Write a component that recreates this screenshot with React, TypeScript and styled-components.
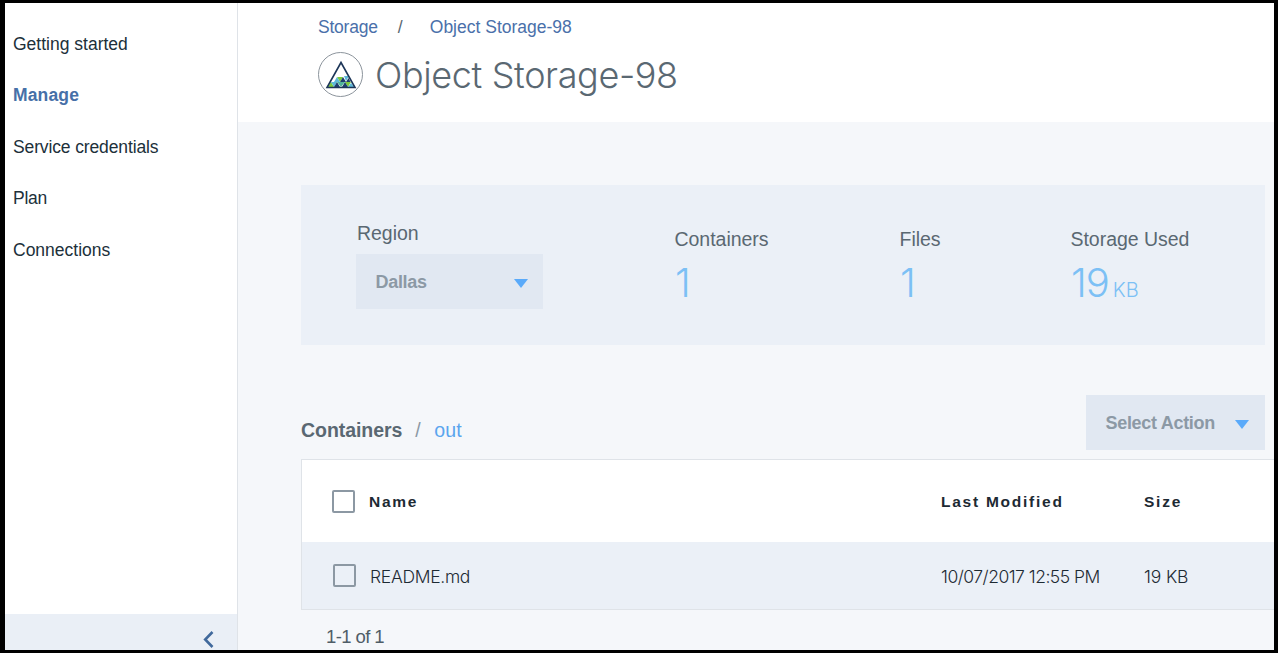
import React from 'react';
import styled, { createGlobalStyle } from 'styled-components';

const sans = '"Liberation Sans", Arial, sans-serif';
const light = 'Inter, "Liberation Sans", sans-serif';

const GlobalStyle = createGlobalStyle`
  *, *::before, *::after { box-sizing: border-box; }
  body { margin: 0; font-family: ${sans}; color: #1d3649; }
`;

const Frame = styled.div`
  display: flex;
  width: 1278px;
  height: 653px;
  overflow: hidden;
  border: solid #000;
  border-width: 3px 4px 3px 5px;
  background: #f5f7fa;
`;

const Sidebar = styled.aside`
  display: flex;
  flex-direction: column;
  flex: 0 0 233px;
  background: #fff;
  border-right: 1px solid #dfe3e8;
`;

const Nav = styled.nav`
  display: flex;
  flex-direction: column;
  flex: 1;
  padding: 15.5px 0 0 8px;
`;

const NavItem = styled.a<{ $active?: boolean; $spacing: number }>`
  height: 51.5px;
  line-height: 51.5px;
  font-size: 17.5px;
  white-space: nowrap;
  letter-spacing: ${(p) => p.$spacing}px;
  font-weight: ${(p) => (p.$active ? 700 : 400)};
  color: ${(p) => (p.$active ? '#4670a8' : '#20303a')};
`;

const Collapse = styled.div`
  display: flex;
  justify-content: flex-end;
  height: 36px;
  padding: 16px 23px 0 0;
  background: #eaeff6;
`;

const Main = styled.main`
  display: flex;
  flex-direction: column;
  flex: 1;
  min-width: 0;
`;

const Header = styled.header`
  height: 119px;
  padding: 13px 0 0 80px;
  background: #fff;
`;

const Crumbs = styled.div`
  display: flex;
  align-items: center;
  height: 22px;
  font-size: 17.5px;
  letter-spacing: -0.22px;
  color: #4a70aa;
`;

const CrumbSlash = styled.span`
  width: 52px;
  padding-left: 20px;
  color: #5a6872;
`;

const CrumbCurrent = styled.span`
  letter-spacing: 0;
`;

const TitleRow = styled.div`
  display: flex;
  align-items: center;
  height: 46px;
  margin-top: 14px;
`;

const Title = styled.h1`
  margin: 0 0 0 11px;
  font-family: ${light};
  font-size: 36px;
  font-weight: 300;
  line-height: 46px;
  letter-spacing: -0.37px;
  white-space: nowrap;
  color: #5a6872;
`;

const Content = styled.section`
  display: flex;
  flex-direction: column;
  flex: 1;
  padding: 63px 0 0 63px;
`;

const Summary = styled.div`
  display: grid;
  grid-template-columns: 318px 225px 171px 1fr;
  width: 964px;
  height: 160px;
  padding: 36px 0 0 55px;
  background: #ebf0f7;
`;

const Label = styled.div`
  height: 24px;
  line-height: 24px;
  padding-left: 1px;
  font-size: 19.5px;
  letter-spacing: -0.03px;
  color: #5a6872;
`;

const Stat = styled.div`
  margin-left: -0.5px;
  padding-top: 6px;
`;

const StatValue = styled.div`
  display: flex;
  align-items: baseline;
  margin-top: 7px;
  padding-left: 1.5px;
  font-family: ${light};
  font-size: 40px;
  line-height: 50px;
  font-weight: 300;
  letter-spacing: -1px;
  color: #7cc0f5;
`;

const Unit = styled.span`
  margin-left: 4px;
  font-size: 20px;
  font-weight: 300;
  letter-spacing: 0;
`;

const Select = styled.div<{ $width: number }>`
  display: flex;
  align-items: center;
  justify-content: space-between;
  width: ${(p) => p.$width}px;
  height: 55px;
  padding: 2px 15px 0 19.5px;
  background: #e1e8f2;
  font-size: 18px;
  font-weight: 700;
  letter-spacing: -0.3px;
  color: #8c99a5;
`;

const RegionSelect = styled(Select)`
  margin-top: 9px;
`;

const ActionSelect = styled(Select)`
  padding-right: 16px;
`;

const Caret = styled.i`
  margin-top: 1px;
  border: solid transparent;
  border-width: 9px 7.5px 0;
  border-top-color: #5aaafa;
`;

const Toolbar = styled.div`
  display: flex;
  justify-content: space-between;
  width: 964px;
  height: 55px;
  margin: 50px 0 9px;
`;

const Path = styled.div`
  display: flex;
  align-items: center;
  padding-top: 16px;
  font-size: 19.5px;
  color: #5a6872;
`;

const PathRoot = styled.b`
  letter-spacing: -0.05px;
`;

const PathSlash = styled.span`
  padding: 0 13.5px 0 13px;
  color: #8c99a5;
`;

const PathLink = styled.span`
  letter-spacing: 0.2px;
  color: #5aa5ee;
`;

const Table = styled.div`
  border: solid #dfe3e8;
  border-width: 1px 0 1px 1px;
`;

const Row = styled.div<{ $head?: boolean }>`
  display: grid;
  grid-template-columns: 37px ${(p) => (p.$head ? 572 : 571)}px 203px 1fr;
  align-items: center;
  height: ${(p) => (p.$head ? 82 : 67)}px;
  padding-left: ${(p) => (p.$head ? 30 : 31)}px;
  background: ${(p) => (p.$head ? '#fff' : '#ebf0f7')};
`;

const HeadCell = styled.div`
  padding-top: 2px;
  font-size: 15.5px;
  font-weight: 700;
  letter-spacing: 1.75px;
  color: #1d2a33;
`;

const Cell = styled.div<{ $spacing: number }>`
  padding-top: 2px;
  font-family: ${light};
  font-size: 17.5px;
  font-weight: 300;
  letter-spacing: ${(p) => p.$spacing}px;
  color: #1d2a33;
`;

const Checkbox = styled.span`
  width: 23px;
  height: 23px;
  border: 2px solid #8c98a3;
  border-radius: 2px;
`;

const Count = styled.div`
  padding: 15px 0 0 25px;
  font-size: 18.5px;
  line-height: 24px;
  letter-spacing: -0.6px;
  color: #4f5d67;
`;

const StorageLogo = () => (
  <svg width="46" height="46" viewBox="0 0 46 46">
    <circle cx="22.5" cy="22.5" r="22" fill="#fff" stroke="#8c949c" strokeWidth="1" />
    <path d="M10 35l3-5 3 5zM19 25h6l-3 5zM27 30h6l-3 5z" fill="#7dcb3c" />
    <path d="M13 30h6l-3 5zM16 30l3-5 3 5zM26 24h5l-3 5zM30 35l3-4 3 4z" fill="#5cb8d8" />
    <path d="M16 35l3-5 3 5zM22 30l3-5 3 5zM28 30l2.500-4 2 4zM24 35l3-5 3 5z" fill="#1d3f6e" />
    <path d="M19 30h8l-4 5z" fill="#4fb49a" />
    <path d="M23 10.500L9 35.500h28z" fill="none" stroke="#1d3658" strokeWidth="1.600" />
  </svg>
);

const ChevronLeft = () => (
  <svg width="12" height="18" viewBox="0 0 12 18">
    <path d="M10.500 2L3.200 9.500l7.300 7.500" fill="none" stroke="#41699c" strokeWidth="2.600" />
  </svg>
);

const navItems = [
  { label: 'Getting started', spacing: 0 },
  { label: 'Manage', active: true, spacing: 0.15 },
  { label: 'Service credentials', spacing: -0.13 },
  { label: 'Plan', spacing: -0.25 },
  { label: 'Connections', spacing: 0 },
];

export default function App() {
  return (
    <>
      <GlobalStyle />
      <Frame>
        <Sidebar>
          <Nav>
            {navItems.map((n) => (
              <NavItem key={n.label} $active={n.active} $spacing={n.spacing}>{n.label}</NavItem>
            ))}
          </Nav>
          <Collapse><ChevronLeft /></Collapse>
        </Sidebar>
        <Main>
          <Header>
            <Crumbs>
              <span>Storage</span>
              <CrumbSlash>/</CrumbSlash>
              <CrumbCurrent>Object Storage-98</CrumbCurrent>
            </Crumbs>
            <TitleRow>
              <StorageLogo />
              <Title>Object Storage-98</Title>
            </TitleRow>
          </Header>
          <Content>
            <Summary>
              <div>
                <Label>Region</Label>
                <RegionSelect $width={187}>Dallas<Caret /></RegionSelect>
              </div>
              <Stat>
                <Label>Containers</Label>
                <StatValue>1</StatValue>
              </Stat>
              <Stat>
                <Label>Files</Label>
                <StatValue>1</StatValue>
              </Stat>
              <Stat>
                <Label>Storage Used</Label>
                <StatValue>19<Unit>KB</Unit></StatValue>
              </Stat>
            </Summary>
            <Toolbar>
              <Path>
                <PathRoot>Containers</PathRoot>
                <PathSlash>/</PathSlash>
                <PathLink>out</PathLink>
              </Path>
              <ActionSelect $width={179}>Select Action<Caret /></ActionSelect>
            </Toolbar>
            <Table>
              <Row $head>
                <Checkbox />
                <HeadCell>Name</HeadCell>
                <HeadCell>Last Modified</HeadCell>
                <HeadCell>Size</HeadCell>
              </Row>
              <Row>
                <Checkbox />
                <Cell $spacing={-0.3}>README.md</Cell>
                <Cell $spacing={-0.5}>10/07/2017 12:55 PM</Cell>
                <Cell $spacing={-0.15}>19 KB</Cell>
              </Row>
            </Table>
            <Count>1-1 of 1</Count>
          </Content>
        </Main>
      </Frame>
    </>
  );
}
